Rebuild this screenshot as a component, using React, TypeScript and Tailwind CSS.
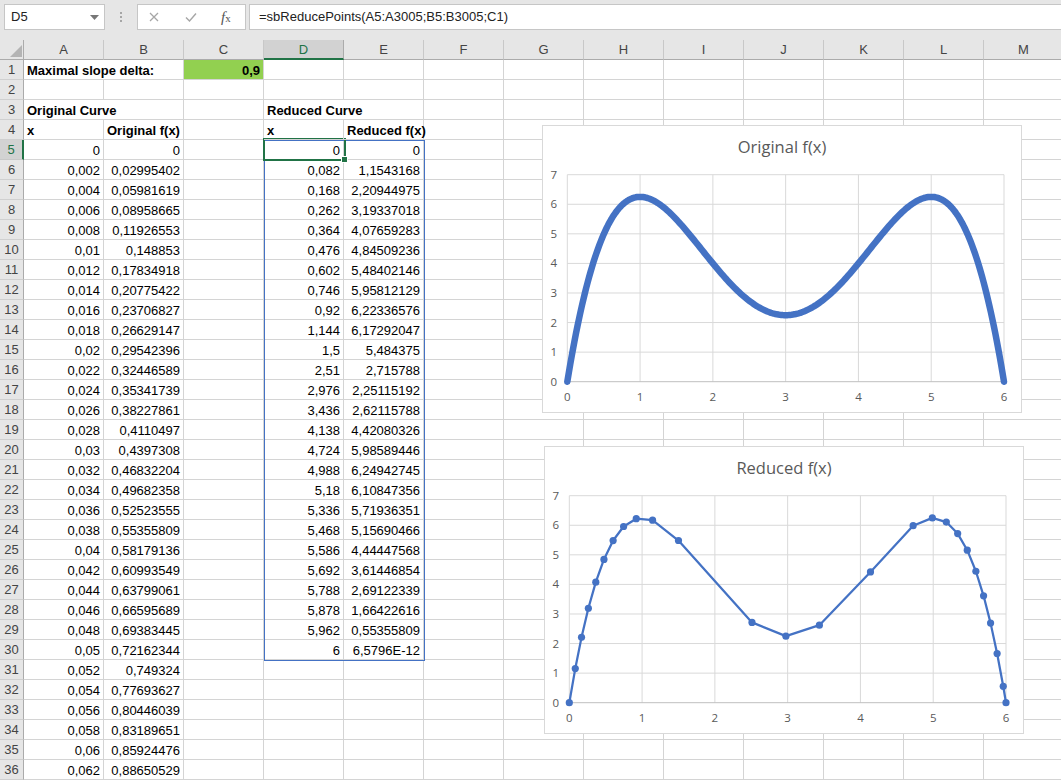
import React from "react";

type Cell = { t?: string; b?: boolean; left?: boolean; bg?: string; open?: boolean };

const COLS = ["A", "B", "C", "D", "E", "F", "G", "H", "I", "J", "K", "L", "M"];

const colB = [
  "0", "0,02995402", "0,05981619", "0,08958665", "0,11926553", "0,148853", "0,17834918",
  "0,20775422", "0,23706827", "0,26629147", "0,29542396", "0,32446589", "0,35341739",
  "0,38227861", "0,4110497", "0,4397308", "0,46832204", "0,49682358", "0,52523555",
  "0,55355809", "0,58179136", "0,60993549", "0,63799061", "0,66595689", "0,69383445",
  "0,72162344", "0,749324", "0,77693627", "0,80446039", "0,83189651", "0,85924476",
  "0,88650529",
];

const reduced: [string, string][] = [
  ["0", "0"], ["0,082", "1,1543168"], ["0,168", "2,20944975"], ["0,262", "3,19337018"],
  ["0,364", "4,07659283"], ["0,476", "4,84509236"], ["0,602", "5,48402146"],
  ["0,746", "5,95812129"], ["0,92", "6,22336576"], ["1,144", "6,17292047"],
  ["1,5", "5,484375"], ["2,51", "2,715788"], ["2,976", "2,25115192"], ["3,436", "2,62115788"],
  ["4,138", "4,42080326"], ["4,724", "5,98589446"], ["4,988", "6,24942745"],
  ["5,18", "6,10847356"], ["5,336", "5,71936351"], ["5,468", "5,15690466"],
  ["5,586", "4,44447568"], ["5,692", "3,61446854"], ["5,788", "2,69122339"],
  ["5,878", "1,66422616"], ["5,962", "0,55355809"], ["6", "6,5796E-12"],
];

const num = (s: string) => parseFloat(s.replace(",", "."));

const fmtX = (i: number) => {
  if (i === 0) return "0";
  return "0," + String(i * 2).padStart(3, "0").replace(/0+$/, "");
};

function buildRows(): Cell[][] {
  const rows: Cell[][] = [];
  for (let r = 1; r <= 36; r++) {
    const row: Cell[] = COLS.map(() => ({}));
    if (r === 1) {
      row[0] = { t: "Maximal slope delta:", b: true, left: true, open: true };
      row[2] = { t: "0,9", b: true, bg: "bg-[#92d050]" };
    } else if (r === 3) {
      row[0] = { t: "Original Curve", b: true, left: true, open: true };
      row[3] = { t: "Reduced Curve", b: true, left: true, open: true };
    } else if (r === 4) {
      row[0] = { t: "x", b: true, left: true };
      row[1] = { t: "Original f(x)", b: true, left: true };
      row[3] = { t: "x", b: true, left: true };
      row[4] = { t: "Reduced f(x)", b: true, left: true };
    } else if (r >= 5) {
      row[0] = { t: fmtX(r - 5) };
      row[1] = { t: colB[r - 5] };
      if (r <= 30) {
        row[3] = { t: reduced[r - 5][0] };
        row[4] = { t: reduced[r - 5][1] };
      }
    }
    rows.push(row);
  }
  return rows;
}

const f = (x: number) => {
  const u = x - 3;
  return 2.25 + 2 * u * u - 0.25 * u * u * u * u;
};

const PX0 = 25.3;
const PX1 = 462;
const PY0 = 256.7;
const PY1 = 49.7;
const sx = (x: number) => PX0 + (x * (PX1 - PX0)) / 6;
const sy = (y: number) => PY0 - (y * (PY0 - PY1)) / 7;

function Chart({ title, kind, className }: { title: string; kind: "orig" | "red"; className: string }) {
  let d = "";
  let pts: [number, number][] = [];
  if (kind === "orig") {
    for (let i = 0; i <= 300; i++) {
      const x = (i * 6) / 300;
      pts.push([x, f(x)]);
    }
  } else {
    pts = reduced.map(([a, b]) => [num(a), num(b)]);
  }
  d = pts.map(([x, y], i) => `${i ? "L" : "M"}${sx(x).toFixed(2)} ${sy(y).toFixed(2)}`).join(" ");

  return (
    <div className={`absolute w-[480px] h-[288px] bg-white border border-[#d9d9d9] ${className}`}>
      <svg width="480" height="288" className="absolute -left-px -top-px" style={{ fontFamily: "'Open Sans', sans-serif" }}>
        <text x="240" y="28" textAnchor="middle" fontSize="16.5" fill="#595959">
          {title}
        </text>
        {[1, 2, 3, 4, 5, 6, 7].map((v) => (
          <line key={"h" + v} x1={PX0} x2={PX1} y1={sy(v)} y2={sy(v)} stroke="#d9d9d9" strokeWidth="1" />
        ))}
        {[0, 1, 2, 3, 4, 5, 6].map((v) => (
          <line key={"v" + v} x1={sx(v)} x2={sx(v)} y1={PY1} y2={PY0} stroke="#d9d9d9" strokeWidth="1" />
        ))}
        <line x1={PX0} x2={PX1} y1={PY0} y2={PY0} stroke="#bfbfbf" strokeWidth="1" />
        {[0, 1, 2, 3, 4, 5, 6, 7].map((v) => (
          <text key={"yl" + v} x="15" y={sy(v) + 4} textAnchor="end" fontSize="11.5" fill="#595959">
            {v}
          </text>
        ))}
        {[0, 1, 2, 3, 4, 5, 6].map((v) => (
          <text key={"xl" + v} x={sx(v)} y="276" textAnchor="middle" fontSize="11.5" fill="#595959">
            {v}
          </text>
        ))}
        {kind === "orig" ? (
          <path d={d} fill="none" stroke="#4472c4" strokeWidth="6.5" strokeLinecap="round" strokeLinejoin="round" />
        ) : (
          <>
            <path d={d} fill="none" stroke="#4472c4" strokeWidth="2.25" strokeLinejoin="round" />
            {pts.map(([x, y], i) => (
              <circle key={i} cx={sx(x)} cy={sy(y)} r="3.6" fill="#4472c4" />
            ))}
          </>
        )}
      </svg>
    </div>
  );
}

function FormulaBar() {
  return (
    <div className="h-10 flex items-start pt-1 pl-1 gap-0">
      <div className="w-[101px] h-[26px] bg-white border border-[#c6c6c6] flex items-center justify-between pl-[6px] pr-[5px]">
        <span className="text-[13px] text-[#222]">D5</span>
        <svg width="9" height="5" viewBox="0 0 9 5">
          <path d="M0 0h9L4.5 5z" fill="#777" />
        </svg>
      </div>
      <div className="w-8 h-[26px] flex flex-col items-center justify-center gap-[2px]">
        <span className="w-[2px] h-[2px] bg-[#a6a6a6]" />
        <span className="w-[2px] h-[2px] bg-[#a6a6a6]" />
        <span className="w-[2px] h-[2px] bg-[#a6a6a6]" />
      </div>
      <div className="w-[109px] h-[26px] bg-white border border-[#c6c6c6] flex items-center">
        <svg width="10" height="10" viewBox="0 0 10 10" className="ml-[11px]">
          <path d="M1 1l8 8M9 1l-8 8" stroke="#a6a6a6" strokeWidth="1.3" />
        </svg>
        <svg width="12" height="10" viewBox="0 0 12 10" className="ml-[26px]">
          <path d="M1 5.5l3.5 3.5L11 1.5" stroke="#a6a6a6" strokeWidth="1.4" fill="none" />
        </svg>
        <span className="ml-[24px] text-[15px] text-[#555] italic leading-none" style={{ fontFamily: "'Liberation Serif', serif" }}>
          f<span className="text-[11px] not-italic">x</span>
        </span>
      </div>
      <div className="ml-[3px] flex-1 h-[26px] bg-white border border-[#c6c6c6] border-r-0 flex items-center pl-[9px]">
        <span className="text-[13px] text-[#222]">=sbReducePoints(A5:A3005;B5:B3005;C1)</span>
      </div>
    </div>
  );
}

export default function App() {
  const rows = buildRows();
  return (
    <div className="relative w-[1061px] h-[780px] overflow-hidden bg-[#e6e6e6]" style={{ fontFamily: "'Liberation Sans', Arial, sans-serif" }}>
      <FormulaBar />
      <div className="grid grid-cols-[24px_repeat(13,80px)] bg-white">
        {/* column header row */}
        <div className="h-5 bg-[#e6e6e6] border-r border-b border-[#ababab] relative">
          <svg width="12" height="12" className="absolute left-[10px] top-[5px]">
            <path d="M12 0V12H0z" fill="#b4b4b4" />
          </svg>
        </div>
        {COLS.map((c) =>
          c === "D" ? (
            <div key={c} className="h-5 bg-[#d2d2d2] border-r border-[#ababab] border-b-2 border-b-[#217346] text-center text-[13px] leading-[20px] text-[#217346]">
              {c}
            </div>
          ) : (
            <div key={c} className="h-5 bg-[#e6e6e6] border-r border-[#c8c8c8] border-b border-b-[#ababab] text-center text-[13px] leading-[20px] text-[#444]">
              {c}
            </div>
          )
        )}
        {rows.map((row, ri) => (
          <React.Fragment key={ri}>
            {ri === 4 ? (
              <div className="h-5 bg-[#d2d2d2] border-r-2 border-r-[#217346] border-b border-b-[#c8c8c8] text-center text-[13px] leading-[20px] text-[#217346]">
                {ri + 1}
              </div>
            ) : (
              <div className="h-5 bg-[#e6e6e6] border-r border-r-[#ababab] border-b border-b-[#d0d0d0] text-center text-[13px] leading-[20px] text-[#444]">
                {ri + 1}
              </div>
            )}
            {row.map((cell, ci) => (
              <div
                key={ci}
                className={`h-5 border-b border-[#d4d4d4] ${cell.open ? "border-r-0 pr-px" : "border-r"} ${cell.bg ?? ""} px-[3px] text-[13px] leading-[21px] text-black whitespace-nowrap ${
                  cell.left ? "text-left overflow-visible relative z-[1]" : "text-right overflow-hidden"
                } ${cell.b ? "font-bold" : ""}`}
              >
                {cell.t ?? ""}
              </div>
            ))}
          </React.Fragment>
        ))}
      </div>

      {/* selection overlays */}
      <div className="absolute left-[264px] top-[140px] w-[161px] h-[521px] border border-[#4472c4] pointer-events-none" />
      <div className="absolute left-[263px] top-[138px] w-[83px] h-[23px] border-2 border-[#217346] pointer-events-none" />
      <div className="absolute left-[341px] top-[156px] w-[7px] h-[7px] bg-[#217346] border border-white" />

      <Chart title="Original f(x)" kind="orig" className="left-[542px] top-[125px]" />
      <Chart title="Reduced f(x)" kind="red" className="left-[544px] top-[446px]" />
    </div>
  );
}
